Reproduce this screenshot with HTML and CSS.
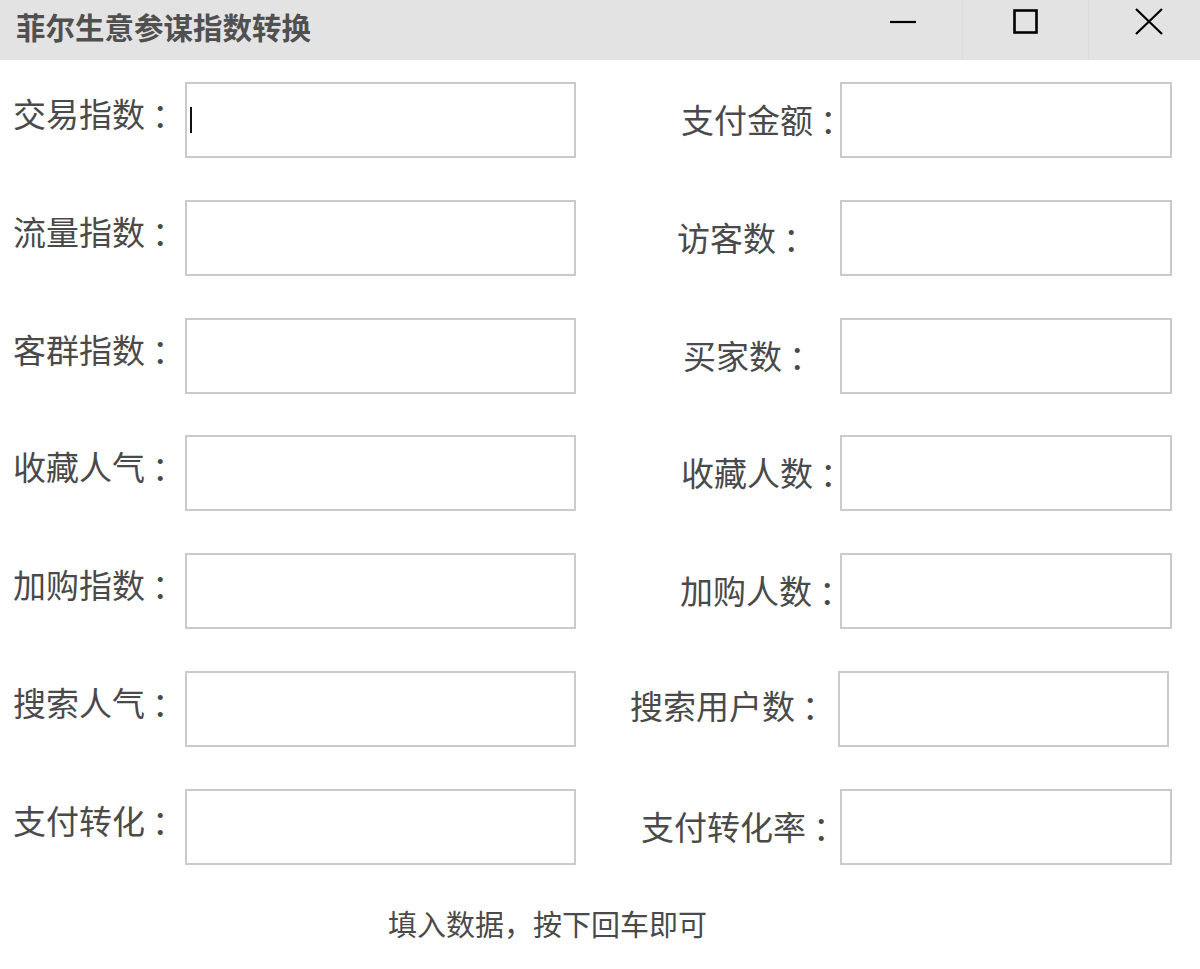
FILE: index.html
```html
<!DOCTYPE html>
<html lang="zh-CN">
<head>
<meta charset="utf-8">
<title>菲尔生意参谋指数转换</title>
<link rel="stylesheet" href="styles.css">
</head>
<body>
<div class="window">
  <header class="titlebar">
    <div class="title">菲尔生意参谋指数转换</div>
    <div class="controls">
      <div class="ctl ctl-min">
        <svg width="28" height="28" viewBox="0 0 28 28"><line x1="1" y1="14" x2="27" y2="14" stroke="#000" stroke-width="2.2"/></svg>
      </div>
      <div class="ctl ctl-max">
        <svg width="28" height="28" viewBox="0 0 28 28"><rect x="2.5" y="2.5" width="22" height="22" fill="none" stroke="#000" stroke-width="2.6"/></svg>
      </div>
      <div class="ctl ctl-close">
        <svg width="30" height="28" viewBox="0 0 30 28"><path d="M2 1 L28 26 M28 1 L2 26" stroke="#000" stroke-width="2.2" fill="none"/></svg>
      </div>
    </div>
  </header>

  <main class="form">
    <div class="row">
      <label class="lab-left">交易指数<span class="colon">：</span></label>
      <div class="field-wrap"><input class="field field-left" type="text"><span class="caret"></span></div>
      <label class="lab-right lr-4">支付金额<span class="colon">：</span></label>
      <input class="field field-right" type="text">
    </div>
    <div class="row">
      <label class="lab-left">流量指数<span class="colon">：</span></label>
      <input class="field field-left" type="text">
      <label class="lab-right lr-visit">访客数<span class="colon">：</span></label>
      <input class="field field-right" type="text">
    </div>
    <div class="row">
      <label class="lab-left">客群指数<span class="colon">：</span></label>
      <input class="field field-left" type="text">
      <label class="lab-right lr-buyer">买家数<span class="colon">：</span></label>
      <input class="field field-right" type="text">
    </div>
    <div class="row">
      <label class="lab-left">收藏人气<span class="colon">：</span></label>
      <input class="field field-left" type="text">
      <label class="lab-right lr-4">收藏人数<span class="colon">：</span></label>
      <input class="field field-right" type="text">
    </div>
    <div class="row">
      <label class="lab-left">加购指数<span class="colon">：</span></label>
      <input class="field field-left" type="text">
      <label class="lab-right lr-cart">加购人数<span class="colon">：</span></label>
      <input class="field field-right" type="text">
    </div>
    <div class="row">
      <label class="lab-left">搜索人气<span class="colon">：</span></label>
      <input class="field field-left" type="text">
      <label class="lab-right lr-search">搜索用户数<span class="colon">：</span></label>
      <input class="field field-right field-shift" type="text">
    </div>
    <div class="row">
      <label class="lab-left">支付转化<span class="colon">：</span></label>
      <input class="field field-left" type="text">
      <label class="lab-right lr-rate">支付转化率<span class="colon">：</span></label>
      <input class="field field-right" type="text">
    </div>
    <p class="hint">填入数据，按下回车即可</p>
  </main>
</div>
</body>
</html>
```

FILE: styles.css
```css
* { box-sizing: border-box; }
html, body { margin: 0; padding: 0; background: #fff; }
body {
  width: 1200px;
  height: 969px;
  overflow: hidden;
  font-family: "Noto Sans CJK SC", "Noto Sans", sans-serif;
  color: #4a4a4a;
}
.window { width: 1200px; }

.titlebar {
  height: 60px;
  background: #e3e3e3;
  display: flex;
  align-items: stretch;
  justify-content: space-between;
}
.title {
  padding-left: 16px;
  font-size: 29.5px;
  font-weight: 700;
  line-height: 52px;
  color: #505050;
  white-space: nowrap;
}
.controls { display: flex; }
.ctl {
  width: 126px;
  display: flex;
  justify-content: center;
  padding-top: 8px;
}
.ctl svg { display: block; }
.ctl-max, .ctl-close { border-left: 1px solid #dcdcdc; }
.ctl-min { padding-left: 8px; }
.ctl-close { width: 112px; padding-left: 8px; }

.form {
  padding-top: 22px;
  display: flex;
  flex-direction: column;
  gap: 41.8px;
}
.row {
  display: flex;
  align-items: flex-start;
  height: 76px;
}
.lab-left {
  width: 185px;
  padding-left: 13px;
  font-size: 33px;
  line-height: 62px;
  white-space: nowrap;
  color: #4a4a4a;
}
.lab-right {
  width: 264px;
  font-size: 33px;
  line-height: 74px;
  white-space: nowrap;
  color: #4a4a4a;
}
.colon { padding-left: 7px; }
.lr-4 { padding-left: 105px; }
.lr-visit { padding-left: 101px; }
.lr-buyer { padding-left: 107px; }
.lr-cart { padding-left: 104px; }
.lr-search { padding-left: 54px; line-height: 68px; }
.lr-rate { padding-left: 65px; }

.field {
  display: block;
  height: 76px;
  margin: 0;
  padding: 0 6px;
  border: 2px solid #c9c9d2;
  border-radius: 0;
  background: #fff;
  font-family: inherit;
  font-size: 30px;
  outline: none;
}
.field-left { width: 391px; }
.field-right { width: 332px; }
.field-shift { margin-left: -2px; width: 331px; }

.field-wrap { position: relative; }
.caret {
  position: absolute;
  left: 5px;
  top: 25px;
  width: 2px;
  height: 26px;
  background: #111;
}

.hint {
  margin: 0;
  padding-left: 388px;
  margin-top: -4px;
  font-size: 29px;
  line-height: 40px;
  color: #4a4a4a;
}
```
